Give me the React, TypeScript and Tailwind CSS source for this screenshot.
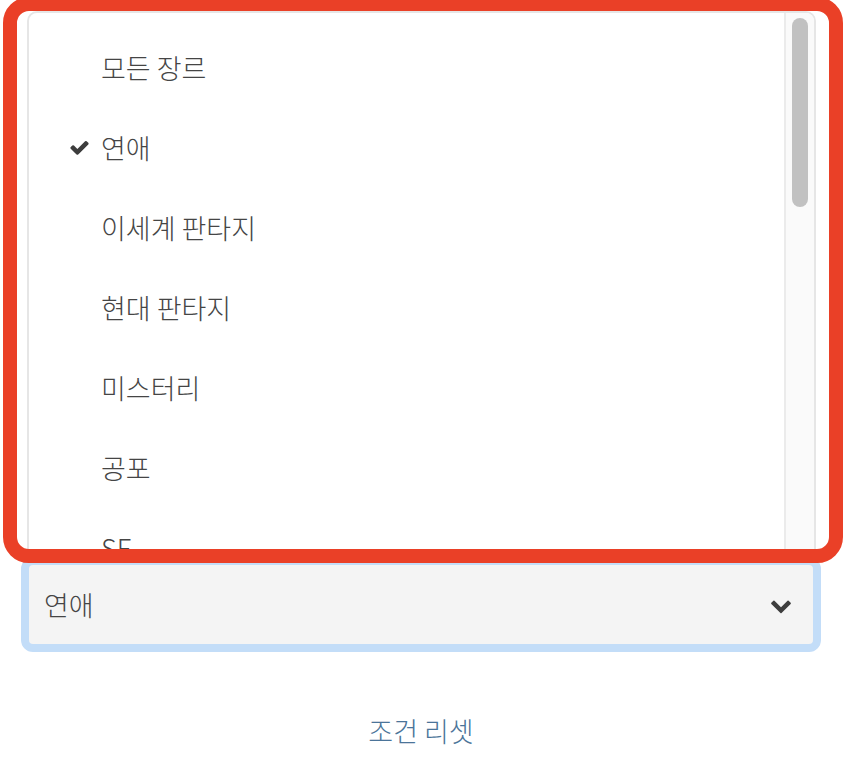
const GENRES = ["모든 장르", "연애", "이세계 판타지", "현대 판타지", "미스터리", "공포", "SF"];

const CheckIcon = () => (
  <svg viewBox="0 0 1792 1792" className="w-[21px] h-[21px] fill-[#3d3d3d]">
    <path d="M1671 566q0 40-28 68l-724 724-136 136q-28 28-68 28t-68-28l-136-136-362-362q-28-28-28-68t28-68l136-136q28-28 68-28t68 28l294 295 656-657q28-28 68-28t68 28l136 136q28 28 28 68z" />
  </svg>
);

const ChevronIcon = () => (
  <svg viewBox="0 0 1792 1792" className="w-[22px] h-[22px] fill-[#3d3d3d]">
    <path d="M1683 808l-742 741q-19 19-45 19t-45-19l-742-741q-19-19-19-45.5t19-45.5l166-165q19-19 45-19t45 19l531 531 531-531q19-19 45-19t45 19l166 165q19 19 19 45.5t-19 45.5z" />
  </svg>
);

const GenreOption = ({ label, selected }: { label: string; selected: boolean }) => (
  <li className="h-[80px] flex items-center">
    <span className="w-[72px] flex justify-end pr-[11px]">{selected && <CheckIcon />}</span>
    <span className="text-[27px] font-light text-[#454545] leading-none">{label}</span>
  </li>
);

export default function App() {
  const selected = "연애";

  return (
    <div className="relative w-[856px] h-[768px] bg-white overflow-hidden font-['Noto_Sans_CJK_KR','Noto_Sans',sans-serif]">
      <div className="pt-[11px]">
        {/* open option list */}
        <div className="ml-[27px] w-[789px] h-[548px] flex bg-white border-2 border-[#e6e6e6] rounded-t-[10px] overflow-hidden">
          <ul className="flex-1 pt-[14px]">
            {GENRES.map((g) => (
              <GenreOption key={g} label={g} selected={g === selected} />
            ))}
          </ul>
          <div className="w-[30px] bg-[#fafafa] border-l-2 border-[#ebebeb] pt-[5px] pl-[6px]">
            <div className="w-[16px] h-[189px] rounded-full bg-[#c1c1c1]" />
          </div>
        </div>

        <div className="mx-[21px] w-[800px]">
          {/* select field */}
          <div className="h-[95px] -mt-[2px] border-[8px] border-[#c3ddf8] rounded-[12px] bg-[#f4f4f4] flex items-center justify-between pl-[15px] pr-[21px]">
            <span className="text-[27px] font-light text-[#454545] leading-none">{selected}</span>
            <ChevronIcon />
          </div>

          <div className="mt-[65px] text-center text-[27px] font-light text-[#4b7499] leading-none">조건 리셋</div>
        </div>
      </div>

      {/* highlight frame */}
      <div className="absolute left-[3px] top-[-3px] w-[840px] h-[566px] border-[14px] border-[#ea4027] rounded-[26px] pointer-events-none" />
    </div>
  );
}
